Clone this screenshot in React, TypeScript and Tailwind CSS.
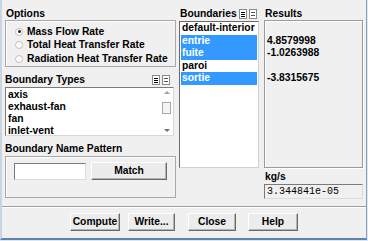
import React from "react"

const BOUNDARIES = [
  { name: "default-interior", selected: false, value: "" },
  { name: "entrie", selected: true, value: "4.8579998" },
  { name: "fuite", selected: true, value: "-1.0263988" },
  { name: "paroi", selected: false, value: "" },
  { name: "sortie", selected: true, value: "-3.8315675" },
]

const TYPES = ["axis", "exhaust-fan", "fan", "inlet-vent"]

function ListIcons() {
  return (
    <div className="flex items-center gap-[2px]">
      <div className="w-[8px] h-[10px] border border-[#8a8a8a] bg-white flex flex-col items-center justify-center gap-[1px]">
        <div className="w-[4px] h-[1px] bg-black" />
        <div className="w-[4px] h-[1px] bg-black" />
        <div className="w-[4px] h-[1px] bg-black" />
      </div>
      <div className="w-[8px] h-[10px] border border-[#8a8a8a] bg-white flex flex-col items-center justify-center gap-[2px]">
        <div className="w-[4px] h-[1px] bg-[#555]" />
        <div className="w-[4px] h-[1px] bg-[#555]" />
      </div>
    </div>
  )
}

function Radio({ label, checked }: { label: string; checked?: boolean }) {
  return (
    <div className="flex items-center h-[13.5px]">
      <div className="w-[8px] h-[8px] rounded-full border border-[#c0c0c0] bg-white flex items-center justify-center">
        {checked && <div className="w-[3px] h-[3px] rounded-full bg-[#222]" />}
      </div>
      <span className="ml-[4px]">{label}</span>
    </div>
  )
}

function Button({ label, w }: { label: string; w: string }) {
  return (
    <div className={`${w} h-[18px] flex items-center justify-center bg-[#ececec] border border-t-white border-l-white border-r-[#6a6a6a] border-b-[#6a6a6a] shadow-[inset_-1px_-1px_0_#b4b4b4]`}>
      {label}
    </div>
  )
}

export default function App() {
  return (
    <div className="w-[368px] h-[241px] bg-[#dfe6ee]">
      <div className="w-[367px] h-[240px] bg-[#f0f0f0] border-l-2 border-l-[#c9d5e2] border-r border-r-[#8aa0ba] border-b-2 border-b-[#5f83ab] font-['Liberation_Sans',Arial,sans-serif] font-bold text-[10.3px] leading-[12px] text-black">
        <div className="flex pt-[8px] pl-[3px] h-[206px]">
          {/* left column */}
          <div className="w-[171px] flex flex-col">
            <div className="h-[12px] pl-[1px]">Options</div>
            <div className="h-[47px] border border-[#a8a8a8] shadow-[inset_1px_1px_0_#fff] pl-[9px] pt-[4px]">
              <Radio label="Mass Flow Rate" checked />
              <Radio label="Total Heat Transfer Rate" />
              <Radio label="Radiation Heat Transfer Rate" />
            </div>
            <div className="mt-[6px] h-[14px] flex items-center justify-between pr-[6px]">
              <span>Boundary Types</span>
              <ListIcons />
            </div>
            <div className="w-[169px] h-[49px] flex bg-white border border-t-[#7a7a7a] border-l-[#7a7a7a] border-r-[#d8d8d8] border-b-[#d8d8d8]">
              <div className="flex-1 pt-[1px] pl-[2px]">
                {TYPES.map(t => (
                  <div key={t} className="h-[12px] leading-[12px]">{t}</div>
                ))}
              </div>
              <div className="w-[11px] mr-[1px] flex flex-col items-center justify-between py-[3px]">
                <div className="w-0 h-0 border-l-[3px] border-r-[3px] border-b-[3px] border-l-transparent border-r-transparent border-b-[#a0a0a0]" />
                <div className="w-[9px] h-[12px] mt-[-8px] bg-[#f4f4f4] border border-[#a8a8a8]" />
                <div className="w-0 h-0 border-l-[3px] border-r-[3px] border-t-[3px] border-l-transparent border-r-transparent border-t-[#707070]" />
              </div>
            </div>
            <div className="mt-[6px] h-[14px] flex items-center">Boundary Name Pattern</div>
            <div className="h-[42px] border border-[#a8a8a8] shadow-[inset_1px_1px_0_#fff] flex items-start pl-[8px] pt-[5px] gap-[5px]">
              <div className="w-[72px] h-[17px] mt-[1px] bg-white border border-t-[#7a7a7a] border-l-[#7a7a7a] border-r-[#dcdcdc] border-b-[#dcdcdc]" />
              <Button label="Match" w="w-[76px]" />
            </div>
          </div>

          {/* boundaries column */}
          <div className="ml-[3px] w-[80px] flex flex-col">
            <div className="h-[13px] flex items-start justify-between pl-[1px] pr-[2px]">
              <span>Boundaries</span>
              <div className="mt-[1px]"><ListIcons /></div>
            </div>
            <div className="h-[147px] bg-white border border-t-[#6a6a6a] border-l-[#6a6a6a] border-r-[#d0d0d0] border-b-[#d0d0d0] px-[1px]">
              {BOUNDARIES.map(b => (
                <div key={b.name} className={`h-[12.5px] leading-[12.5px] pl-[1px] ${b.selected ? "bg-[#3399ff] text-white" : ""}`}>{b.name}</div>
              ))}
            </div>
          </div>

          {/* results column */}
          <div className="ml-[5px] w-[99px] flex flex-col">
            <div className="h-[12px] pl-[1px]">Results</div>
            <div className="h-[148px] border border-[#9a9a9a] shadow-[inset_1px_1px_0_#fff,1px_1px_0_#fff] pt-[1px] pl-[2px]">
              {BOUNDARIES.map(b => (
                <div key={b.name} className="h-[12.5px] leading-[12.5px]">{b.value}</div>
              ))}
            </div>
            <div className="mt-[3px] h-[13px] pl-[1px]">kg/s</div>
            <div className="h-[15px] border border-t-[#7a7a7a] border-l-[#7a7a7a] border-r-[#dcdcdc] border-b-[#dcdcdc] pl-[2px] font-['Liberation_Mono',monospace] font-normal text-[10px] leading-[13px]">
              3.344841e-05
            </div>
          </div>
        </div>

        <div className="h-[2px] border-t border-t-[#a0a0a0] border-b border-b-white" />

        <div className="flex mt-[5px] pl-[68px]">
          <Button label="Compute" w="w-[50px]" />
          <div className="ml-[8px]"><Button label="Write..." w="w-[47px]" /></div>
          <div className="ml-[13px]"><Button label="Close" w="w-[48px]" /></div>
          <div className="ml-[12px]"><Button label="Help" w="w-[50px]" /></div>
        </div>
      </div>
    </div>
  )
}
